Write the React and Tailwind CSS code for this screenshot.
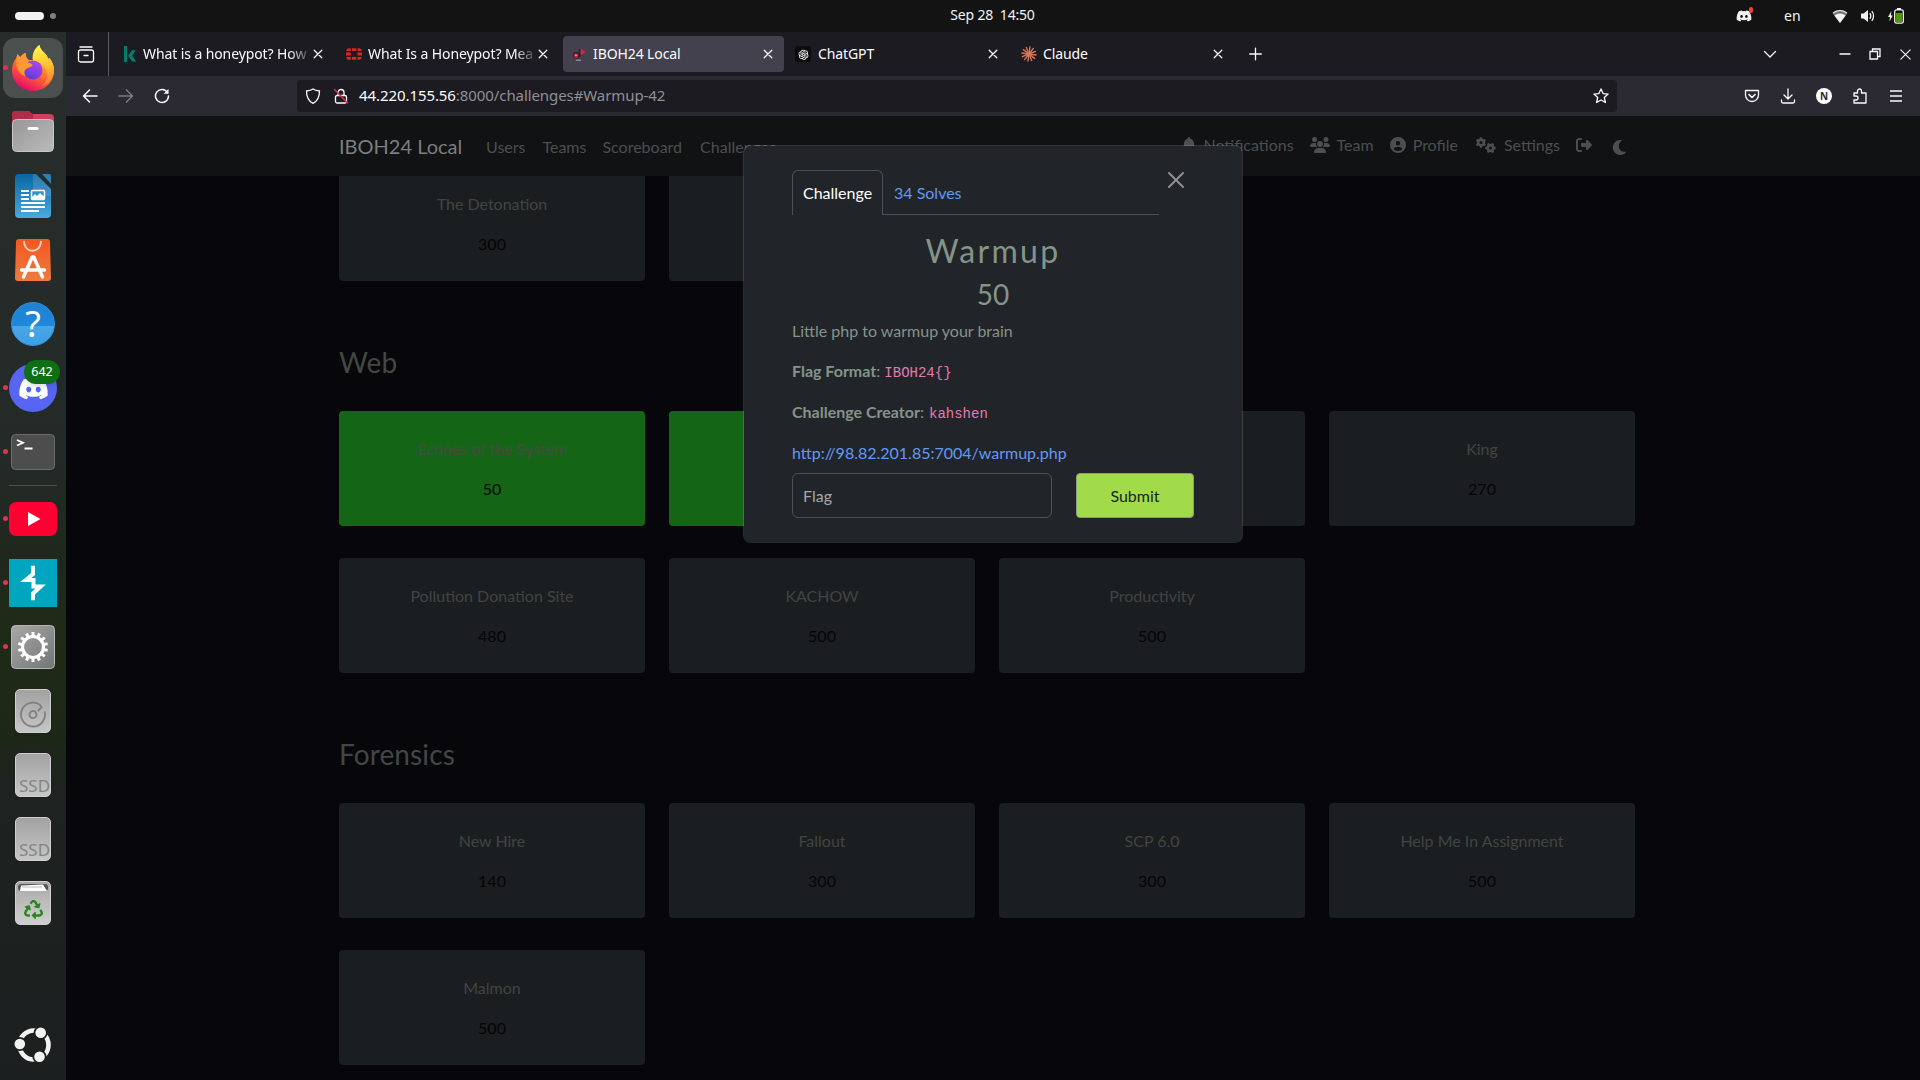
import React from "react";
import { FaDiscord, FaRecycle, FaMoon } from "react-icons/fa";
import { FaBell, FaUsers, FaCircleUser, FaGears, FaRightFromBracket } from "react-icons/fa6";
import { AiOutlineOpenAI } from "react-icons/ai";

const rays = Array.from({ length: 12 }, (_, i) => i * 30 + 8);
const teeth = Array.from({ length: 14 }, (_, i) => (i * 360) / 14);

function Svg({ s = 16, children, className = "", vb }) {
  return (
    <svg width={s} height={s} viewBox={vb || "0 0 16 16"} fill="none" stroke="currentColor" strokeWidth="1.3" strokeLinecap="round" strokeLinejoin="round" className={"shrink-0 " + className}>
      {children}
    </svg>
  );
}

function CloseX() {
  return <Svg s={10} vb="0 0 10 10"><path d="M1.2 1.2l7.6 7.6M8.800 1.2L1.2 8.8" /></Svg>;
}

function Kaspersky() {
  return (
    <svg width="16" height="16" viewBox="0 0 16 16" className="shrink-0" fill="#00806a">
      <path d="M1 0h3v16H1zM5 9.700L9 4.300h3.600L9.200 9.800l4 5.700H9.300z" />
    </svg>
  );
}

function Fortinet() {
  return (
    <svg width="16" height="16" viewBox="0 0 16 16" className="-ml-0.5 mr-0.5 shrink-0" fill="#da291c">
      <path d="M6 2.200h4.300v2.800H6zM6 11h4.300v2.800H6zM0 6.500h4.700v3H0zM11.500 6.500H16v3h-4.500zM3 2.200h1.700V5H.2C.3 3.500 1.500 2.200 3 2.200zM11.500 2.200H13c1.500 0 2.800 1.300 2.900 2.800h-4.400zM.2 11h4.500v2.800H3C1.500 13.800.3 12.500.2 11zM11.500 11h4.400c-.1 1.500-1.400 2.800-2.900 2.800h-1.500z" />
    </svg>
  );
}

function FlagFavicon() {
  return (
    <svg width="16" height="16" viewBox="0 0 16 16" className="-ml-0.5 mr-0.5 shrink-0">
      <path d="M9.500 2.500L15 6 9.500 9.500z" fill="#dc2148" />
      <path d="M8.600 3v8" stroke="#23222a" strokeWidth="1.600" />
      <circle cx="5.200" cy="9.500" r="3.400" fill="#2a2530" />
      <circle cx="5" cy="9.800" r="2.400" fill="#c91f43" />
      <circle cx="5" cy="9.300" r=".8" fill="#f2c9d0" />
      <path d="M4.800 14.200h5.200" stroke="#9c9aa5" strokeWidth="1.200" />
    </svg>
  );
}

function ClaudeMark() {
  return (
    <svg width="16" height="16" viewBox="0 0 16 16" className="-ml-0.5 mr-0.5 shrink-0" stroke="#d97757" strokeWidth="1.400" strokeLinecap="round">
      {rays.map((a) => <path key={a} d="M8 8V.9" transform={`rotate(${a} 8 8)`} />)}
    </svg>
  );
}

function ChatMark() {
  return (
    <span className="-ml-[3px] mr-[3px] flex size-4 shrink-0 items-center justify-center rounded-[3px] bg-[#0c0c0c] text-[13px] text-white">
      <AiOutlineOpenAI />
    </span>
  );
}

function Tab({ icon, title, active, fade }) {
  return (
    <div className={"mr-1 flex h-9 w-[221px] shrink-0 items-center rounded-[4px] pl-[10px] pr-[11px] " + (active ? "bg-[#42414d]" : "")}>
      {icon}
      <span className={"ml-1 h-5 flex-1 overflow-hidden whitespace-nowrap text-[14px] leading-5 tracking-[-0.100px] " + (fade ? "[mask-image:linear-gradient(to_right,black_86%,transparent_100%)]" : "")}>{title}</span>
      <CloseX />
    </div>
  );
}

function TopBar() {
  return (
    <header className="flex h-8 shrink-0 items-center bg-[#131313] text-[#f2f2f2]">
      <div className="flex w-[899px] items-center gap-1.5 pl-[15px]">
        <span className="h-2 w-[29px] rounded-full bg-[#f2f2f2]" />
        <span className="h-1.5 w-1.5 rounded-full bg-[#7f7f7f]" />
      </div>
      <div className="w-[187px] whitespace-pre pb-[3px] text-center text-[14px] tracking-[-0.2px]">Sep 28  14:50</div>
      <div className="flex flex-1 items-center justify-end pr-[15px]">
        <span className="relative text-[16px]">
          <FaDiscord />
          <span className="absolute -right-px -top-px h-1.5 w-1 rounded-full bg-[#f23f43]" />
        </span>
        <span className="ml-[32px] w-4 pb-px text-center text-[14px]">en</span>
        <svg className="ml-[32px]" width="16" height="16" viewBox="0 0 16 16">
          <path d="M8 15L.6 5.200C2.600 3 5 2 8 2s5.400 1 7.400 3.200z" fill="#777" />
          <path d="M1 5.200C3 3.200 5.300 2.500 8 2.500s5 .7 7 2.700" stroke="#f2f2f2" strokeWidth="1.200" fill="none" />
          <path d="M8 15L2.400 7.600C4 6.200 5.800 5.500 8 5.500s4 .7 5.600 2.100z" fill="#f2f2f2" />
        </svg>
        <svg className="ml-[12px]" width="16" height="16" viewBox="0 0 16 16" fill="none" stroke="#f2f2f2" strokeWidth="1.300">
          <path d="M1 5.500h2.500L8 2v12l-4.500-3.500H1z" fill="#f2f2f2" stroke="none" />
          <path d="M9.800 5.200c1.200 1.600 1.200 4 0 5.600M11.800 3.200c2.300 2.700 2.300 6.900 0 9.600" />
        </svg>
        <svg className="ml-[11px]" width="18" height="16" viewBox="0 0 18 16">
          <path d="M4.500 3L1 9h2l-.6 4.500L5.700 7.500H3.800z" fill="#f2f2f2" />
          <rect x="7.700" y="1.900" width="8.600" height="13.300" rx="1.800" fill="none" stroke="#f2f2f2" strokeWidth="1.300" />
          <rect x="10" y="0" width="4" height="2" fill="#f2f2f2" />
          <rect x="9" y="5" width="6" height="9" fill="#4e9a06" />
        </svg>
      </div>
    </header>
  );
}

function Drive({ children }) {
  return (
    <span className="flex h-11 w-9 items-end justify-center overflow-hidden rounded-[5px] border border-[#cfcfcf] bg-linear-to-b from-[#a2a2a2] to-[#c6c6c6] shadow">
      {children}
    </span>
  );
}

const firefox = (
  <svg width="42" height="46" viewBox="0 0 42 46" className="shrink-0">
    <defs>
      <linearGradient id="fxBody" x1=".8" y1="0" x2=".3" y2="1"><stop offset="0" stopColor="#ffd83f" /><stop offset=".35" stopColor="#ffa32b" /><stop offset=".65" stopColor="#ff5b35" /><stop offset="1" stopColor="#e3066f" /></linearGradient>
      <linearGradient id="fxGlobe" x1=".7" y1="0" x2=".3" y2="1"><stop offset="0" stopColor="#b344f5" /><stop offset="1" stopColor="#5a3fd0" /></linearGradient>
      <linearGradient id="fxTail" x1=".4" y1="0" x2=".6" y2="1"><stop offset="0" stopColor="#fff44f" /><stop offset=".55" stopColor="#ffc02b" /><stop offset="1" stopColor="#ff7a39" /></linearGradient>
    </defs>
    <path d="M27.500 0c.5 5 5 7 7.500 11l1.500 3 1-1c3 4 4.500 8 4.500 12 0 12-9 21-21 21S0 37 0 25.500C0 20 1.500 16 4.500 13l1-4c1.500 2 2 3 3 3 1.500-2 3-3.500 5-4 0 3 1 5 3 7h4.500C19.500 9 23 3 27.500 0z" fill="url(#fxBody)" />
    <path d="M27.500 0c.5 5 5 7 7.500 11l1.500 3 1-1c3 4 4.500 8 4.500 12 0 8-5 14-12 16 5-4 6.500-10 4-16-2-5-8-9-13-9-1-6 1.500-13 6.500-16z" fill="url(#fxTail)" />
    <circle cx="21" cy="25" r="9.500" fill="url(#fxGlobe)" />
    <path d="M4.500 13l1-4c1.500 2 2 3 3 3 1.500-2 3-3.500 5-4 0 3 1 5 3 7l-1 2.500c2 .5 5 1 5 2.500-1 2.500-5 2.500-7 4.500-1.500 1.500-1.500 4 0 6.500-5-1-9-6-9-13z" fill="#ff9a2e" />
  </svg>
);
const files = (
  <svg width="42" height="41" viewBox="0 0 42 41" className="mb-px">
    <defs><linearGradient id="fl" x1="0" y1="0" x2="1" y2="1"><stop offset="0" stopColor="#979797" /><stop offset="1" stopColor="#bbbbbb" /></linearGradient></defs>
    <path d="M0 4a4 4 0 014-4h12c2 0 3 3 5 3h17a4 4 0 014 4v15H0z" fill="#d0405c" />
    <path d="M0 4a4 4 0 014-4h12c2 0 3 3 5 3v12H0z" fill="#b02c49" />
    <rect x=".5" y="8.500" width="41" height="32" rx="4" fill="url(#fl)" stroke="#c6c6c6" />
    <rect x="15.500" y="16" width="11" height="3" rx="1.500" fill="#fff" />
  </svg>
);
const writer = (
  <svg width="38" height="44" viewBox="0 0 38 44">
    <defs><linearGradient id="wr" x1="0" y1="0" x2="0" y2="1"><stop offset="0" stopColor="#0a65a0" /><stop offset="1" stopColor="#4aa9e0" /></linearGradient></defs>
    <path d="M5 0h17l15 15v25a4 4 0 01-4 4H5a4 4 0 01-4-4V4a4 4 0 014-4z" fill="url(#wr)" />
    <path d="M19 0h3l15 15v7H19z" fill="#fff" opacity=".13" />
    <path d="M28 0h7a2 2 0 012 2v8z" fill="#2b7fb5" />
    <path d="M7 17h8M7 21h8M7 25h8M7 29h24M7 33h24M7 37h18" stroke="#fff" strokeWidth="2" />
    <rect x="17.500" y="16.500" width="13" height="9" rx="1" fill="#3792cc" stroke="#fff" strokeWidth="1.500" />
    <path d="M18 25v-2l3-3 2 2 3-3 2 2 2 1v3z" fill="#fff" />
  </svg>
);
const software = (
  <svg width="36" height="42" viewBox="0 0 36 42">
    <defs><linearGradient id="sw" x1="0" y1="0" x2="0" y2="1"><stop offset="0" stopColor="#f4571f" /><stop offset="1" stopColor="#ee7b3f" /></linearGradient></defs>
    <path d="M4 0h28c2 0 3 1 3 3l1 36c0 2-1 3-3 3H3c-2 0-3-1-3-3L1 3c0-2 1-3 3-3z" fill="url(#sw)" />
    <path d="M9 2c0 13 17 13 17 0" stroke="#fbd9c8" strokeWidth="1.800" fill="none" />
    <path d="M8.500 38l8.700-20h1.600l8.700 20M6.500 31h23" stroke="#fff" strokeWidth="3.500" fill="none" strokeLinecap="round" strokeLinejoin="round" />
  </svg>
);
const help = <span className="flex size-11 items-center justify-center rounded-full border border-[#2f93dd] bg-[linear-gradient(#1e83d2_0%,#1e88dc_54%,#4aa5e6_55%,#3d9fe4_100%)] text-[36px] leading-none text-white">?</span>;
const discord = (
  <span className="relative flex size-12 items-center justify-center rounded-full bg-[#5865f2] text-[31px] text-white">
    <FaDiscord />
    <span className="absolute -right-[3px] -top-1 flex h-6 w-9 items-center justify-center rounded-full bg-[#0e6f14] text-[12.500px] shadow-md">642</span>
  </span>
);
const terminal = (
  <svg width="44" height="36" viewBox="0 0 44 36">
    <rect x=".5" y=".5" width="43" height="35" rx="4" fill="#4d4d4d" stroke="#6c6c6c" />
    <path d="M6 6l6 2.700L6 11.500M13.500 14.500h8" stroke="#fff" strokeWidth="1.800" fill="none" />
  </svg>
);
const youtube = (
  <svg width="48" height="34" viewBox="0 0 48 34">
    <rect width="48" height="34" rx="7" fill="#ff0033" />
    <path d="M19 10v14l12.500-7z" fill="#fff" />
  </svg>
);
const burp = (
  <svg width="48" height="48" viewBox="0 0 48 48">
    <rect width="48" height="48" fill="#00a5bf" />
    <path d="M24 6.700v8.300L16.800 21H24.500V27.500h7.200L24 34.500v6.800" stroke="#fff" strokeWidth="4" fill="none" />
  </svg>
);
const settings = (
  <svg width="44" height="44" viewBox="0 0 44 44">
    <defs><linearGradient id="st" x1="0" y1="0" x2="1" y2="1"><stop offset="0" stopColor="#a8a8a8" /><stop offset="1" stopColor="#747474" /></linearGradient></defs>
    <rect x=".5" y=".5" width="43" height="43" rx="4" fill="url(#st)" stroke="#b5b5b5" />
    <g stroke="#fff">
      {teeth.map((a) => <path key={a} d="M22 11V7" strokeWidth="3" transform={`rotate(${a} 22 22)`} />)}
      <circle cx="22" cy="22" r="10.500" strokeWidth="3.200" fill="none" />
    </g>
  </svg>
);
const disk = (
  <Drive>
    <svg width="28" height="28" viewBox="0 0 28 28" className="mb-1" fill="none" stroke="#828282" strokeWidth="1.900">
      <path d="M25.600 11.500A12 12 0 1121 4.800L22.500 7.500 18.800 11" />
      <circle cx="14" cy="14.500" r="3.500" />
    </svg>
  </Drive>
);
const ssd = <Drive><span className="ml-[3px] text-[17px] leading-[21px] text-[#858585]">SSD</span></Drive>;
const trash = (
  <span className="relative flex h-11 w-9 items-center justify-center rounded-[5px] border border-[#d0d0d0] bg-linear-to-b from-[#a9a9a9] to-[#cfcfcf] pt-3 text-[19px] text-[#26871b]">
    <svg width="30" height="8" viewBox="0 0 30 8" className="absolute left-0.5 top-0.5">
      <rect width="30" height="7" rx="3" fill="#555" />
      <path d="M3 1.500l22-1 4 6.500H2z" fill="#fff" /><path d="M4 3h20" stroke="#999" strokeWidth=".7" />
    </svg>
    <FaRecycle />
  </span>
);
const ubuntu = (
  <svg width="38" height="38" viewBox="0 0 38 38" fill="none">
    <circle cx="20" cy="19" r="14.500" stroke="#f2f2f2" strokeWidth="4.600" />
    <g fill="#f2f2f2" stroke="#1d2221" strokeWidth="1.800"><circle cx="5.800" cy="18" r="6.200" /><circle cx="26.700" cy="6.700" r="6.200" /><circle cx="25.500" cy="30.800" r="6.200" /></g>
  </svg>
);

function DockItem({ running, active, children }) {
  return (
    <div className="relative flex h-16 w-full shrink-0 items-center justify-center">
      <span className={active ? "flex h-[60px] w-[60px] items-center justify-center rounded-xl bg-[#4b504e]" : "flex"}>{children}</span>
      {running && <span className="absolute left-[3px] top-[29px] size-[5px] rounded-full bg-[#dc3452]" />}
    </div>
  );
}

function Dock() {
  return (
    <aside className="flex w-[66px] shrink-0 flex-col bg-[linear-gradient(#262d2b_0%,#242a28_40%,#20281d_50%,#1f2b16_57%,#1d2816_66%,#1e2321_73%,#1b1f1f_100%)] pt-1">
      <DockItem running active>{firefox}</DockItem>
      <DockItem>{files}</DockItem>
      <DockItem>{writer}</DockItem>
      <DockItem>{software}</DockItem>
      <DockItem>{help}</DockItem>
      <DockItem running>{discord}</DockItem>
      <DockItem running>{terminal}</DockItem>
      <span className="mx-auto my-px h-px w-12 bg-[#4b4f4a]" />
      <DockItem running>{youtube}</DockItem>
      <DockItem running>{burp}</DockItem>
      <DockItem running>{settings}</DockItem>
      <DockItem>{disk}</DockItem>
      <DockItem>{ssd}</DockItem>
      <DockItem>{ssd}</DockItem>
      <DockItem>{trash}</DockItem>
      <div className="mt-auto pb-[3px]"><DockItem>{ubuntu}</DockItem></div>
    </aside>
  );
}

function TabStrip() {
  return (
    <div className="flex h-11 shrink-0 items-center bg-[#1c1b22] text-[#fbfbfe]">
      <div className="flex h-full w-[43px] shrink-0 items-center justify-center border-r border-[#5a5962] pr-0.5">
        <Svg s={18} vb="0 0 18 18"><rect x="1.500" y="5" width="15" height="12" rx="2" /><path d="M3 2h12M7 10.500h4" /></Svg>
      </div>
      <div className="flex pl-1">
        <Tab icon={<Kaspersky />} title="What is a honeypot? How" fade />
        <Tab icon={<Fortinet />} title="What Is a Honeypot? Mea" fade />
        <Tab icon={<FlagFavicon />} title="IBOH24 Local" active />
        <Tab icon={<ChatMark />} title="ChatGPT" />
        <Tab icon={<ClaudeMark />} title="Claude" />
      </div>
      <div className="pl-[10px]"><Svg s={14} vb="0 0 14 14"><path d="M7.500 1.200v11.600M1.700 7h11.600" /></Svg></div>
      <div className="ml-auto flex items-center pr-[9px]">
        <Svg s={14} vb="0 0 14 14" className="mr-[62px]"><path d="M1.500 4.500L7 10l5.500-5.500" /></Svg>
        <Svg s={12} vb="0 0 12 12" className="mr-[18px]"><path d="M1 6h10" /></Svg>
        <Svg s={12} vb="0 0 12 12" className="mr-[19px]"><path d="M1 3.500h7.500V11H1zM3.500 3.500V1H11v7.500H8.500" strokeLinejoin="miter" /></Svg>
        <Svg s={11} vb="0 0 11 11"><path d="M.8.800l9.400 9.400M10.200.800L.8 10.200" strokeWidth="1.100" /></Svg>
      </div>
    </div>
  );
}

function Toolbar() {
  return (
    <div className="flex h-10 shrink-0 items-center bg-[#2b2a33] text-[#fbfbfe]">
      <div className="flex w-[231px] shrink-0 items-center gap-5 pl-4">
        <Svg><path d="M15 8H1.500M7.500 2l-6 6 6 6" strokeWidth="1.500" /></Svg>
        <Svg className="text-[#7c7b83]"><path d="M1 8h13.500M8.500 2l6 6-6 6" strokeWidth="1.500" /></Svg>
        <Svg><path d="M13.500 4.500A6.500 6.500 0 1014.500 8" strokeWidth="1.500" /><path d="M14.500 1v4.800H9.700z" fill="currentColor" stroke="none" /></Svg>
      </div>
      <div className="flex h-8 w-[1320px] shrink-0 items-center rounded-[4px] bg-[#1c1b22] px-2">
        <Svg><path d="M8 1c2 1.300 4.300 1.700 6.500 2 0 6-1.500 10-6.500 12.300C3 13 1.500 9 1.500 3 3.700 2.700 6 2.300 8 1z" /></Svg>
        <Svg className="ml-3"><rect x="2.500" y="7.500" width="11" height="7.500" rx="1.500" /><path d="M5 7V4.500a3 3 0 016 0V7" /><path d="M1.500 1.500l13 13.500" stroke="#e22850" strokeWidth="1.500" /></Svg>
        <span className="mb-0.5 ml-[10px] text-[15px] tracking-[-0.080px] text-[#8f8f96]"><span className="text-[#fbfbfe]">44.220.155.56</span>:8000/challenges#Warmup-42</span>
        <Svg className="ml-auto"><path d="M8 .9l2.100 4.700 5 .5-3.800 3.400 1.100 5L8 12l-4.400 2.500 1.100-5L.9 6.100l5-.5z" /></Svg>
      </div>
      <div className="ml-auto flex items-center gap-5 pr-4">
        <Svg><path d="M1.500 2.500h13V7a6.500 6.500 0 01-13 0z" /><path d="M5 6.500l3 3 3-3" strokeWidth="1.600" /></Svg>
        <Svg><path d="M8 .8v10M4 7l4 4 4-4M1.500 12v1.500c0 .8.700 1.500 1.500 1.500h10c.8 0 1.500-.7 1.500-1.500V12" /></Svg>
        <span className="flex size-4 items-center justify-center rounded-full bg-white text-[10px] font-bold text-[#2b2a33]">N</span>
        <Svg><path d="M2 7V5h3.500V3a2 2 0 014 0v2H14v10H2v-3h2a2 2 0 000-4H2z" /></Svg>
        <Svg><path d="M2 3h12M2 8h12M2 13h12" strokeLinecap="butt" /></Svg>
      </div>
    </div>
  );
}

function Navbar() {
  return (
    <nav className="flex h-[60px] shrink-0 items-center bg-[#101214] pl-[273px] text-[16px] leading-6 text-[#4c4e4f]">
      <span className="w-[147px] text-[20px] text-[#7c7e80]">IBOH24 Local</span>
      <span className="mt-0.5 flex gap-[17px]"><span>Users</span><span>Teams</span><span className="-ml-px mr-px">Scoreboard</span><span>Challenges</span></span>
      <div className="mb-0.5 ml-auto flex items-center gap-4 pr-[293px]">
        <span className="flex items-center gap-[7px]"><FaBell className="w-[14px]" />Notifications</span>
        <span className="flex items-center gap-[7px]"><FaUsers className="size-5" />Team</span>
        <span className="flex items-center gap-[7px]"><FaCircleUser />Profile</span>
        <span className="ml-0.5 flex items-center gap-[8px]"><FaGears className="size-5" />Settings</span>
        <FaRightFromBracket />
        <FaMoon className="ml-1 mt-1 size-[15px]" />
      </div>
    </nav>
  );
}

function Card({ name, points, solved }) {
  return (
    <div className={"h-[115px] rounded-[4px] pt-[26px] text-center text-[16px] leading-6 " + (solved ? "bg-[#156517]" : "bg-[#1a1e20]")}>
      <p className={solved ? "text-[#464a46]" : "text-[#404542]"}>{name}</p>
      <p className="mt-4 text-[#050509]">{points}</p>
    </div>
  );
}

function Grid({ items }) {
  return (
    <div className="grid grid-cols-[repeat(4,306px)] gap-x-6 gap-y-8">
      {items.map(([name, points, solved], i) => <Card key={i} name={name} points={points} solved={solved} />)}
    </div>
  );
}

function Heading({ children }) {
  return <h3 className="h-[130px] pt-[65px] text-[28px] leading-[33.600px] tracking-[0.120px] text-[#424743]">{children}</h3>;
}

function Modal() {
  return (
    <div className="absolute left-[743px] top-[145px] h-[398px] w-[500px] rounded-lg border border-white/15 bg-[#212529] bg-clip-padding px-12 pt-6 text-[16px] leading-6 text-[#849488]">
      <div className="flex">
        <div className="flex h-[45px] w-[367px] items-stretch">
          <span className="w-[91px] rounded-t-md border border-b-0 border-[#495057] pl-[10px] pt-[10px] text-white">Challenge</span>
          <span className="flex-1 border-b border-[#495057] pl-[11px] pt-[11px] text-[#6199f3]">34 Solves</span>
        </div>
        <svg className="ml-[9px] mt-[2px]" width="16" height="16" viewBox="0 0 16 16" stroke="#909294" strokeWidth="1.900" strokeLinecap="round"><path d="M1 1l14 14M15 1L1 15" /></svg>
      </div>
      <h2 className="mt-[17px] text-center text-[32px] leading-[38.400px] tracking-[2.300px]">Warmup</h2>
      <h3 className="mt-2 text-center text-[28px] leading-[33.600px]">50</h3>
      <p className="mt-[7px] h-6">Little php to warmup your brain</p>
      <p className="mt-4 h-[25px]"><b>Flag Format</b>: <code className="font-['Liberation_Mono',monospace] text-[14px] text-[#e47aae]">{"IBOH24{}"}</code></p>
      <p className="mt-4 h-[25px]"><b>Challenge Creator</b>: <code className="ml-px font-['Liberation_Mono',monospace] text-[14px] text-[#e47aae]">kahshen</code></p>
      <p className="mt-4 h-6 text-[#6199f3]">http://98.82.201.85:7004/warmup.php</p>
      <div className="mt-2 flex gap-6">
        <div className="flex h-[45px] w-[260px] items-center rounded-md border border-[#495057] pl-[10px] text-[#a3a8ad]">Flag</div>
        <div className="flex h-[45px] w-[118px] items-center justify-center rounded-[4px] border border-[#8a9a84] bg-[#a1db4a] text-[#1b2416]">Submit</div>
      </div>
    </div>
  );
}

export default function App() {
  return (
    <div className="relative flex h-[1080px] w-[1920px] flex-col overflow-hidden bg-[#06060b] font-['Noto_Sans','Open_Sans',sans-serif]">
      <TopBar />
      <div className="flex min-h-0 flex-1">
        <Dock />
        <div className="flex min-w-0 flex-1 flex-col">
          <TabStrip />
          <Toolbar />
          <div className="flex min-h-0 flex-1 flex-col font-['Lato',sans-serif]">
            <Navbar />
            <main className="min-h-0 flex-1 overflow-hidden pl-[273px]">
              <div className="-mt-[10px]">
                <Grid items={[["The Detonation", 300], ["", ""]]} />
                <Heading>Web</Heading>
                <Grid items={[["Echoes of the System", 50, true], ["", "", true], ["", ""], ["King", 270], ["Pollution Donation Site", 480], ["KACHOW", 500], ["Productivity", 500]]} />
                <Heading>Forensics</Heading>
                <Grid items={[["New Hire", 140], ["Fallout", 300], ["SCP 6.0", 300], ["Help Me In Assignment", 500], ["Malmon", 500]]} />
              </div>
            </main>
            <Modal />
          </div>
        </div>
      </div>
    </div>
  );
}
